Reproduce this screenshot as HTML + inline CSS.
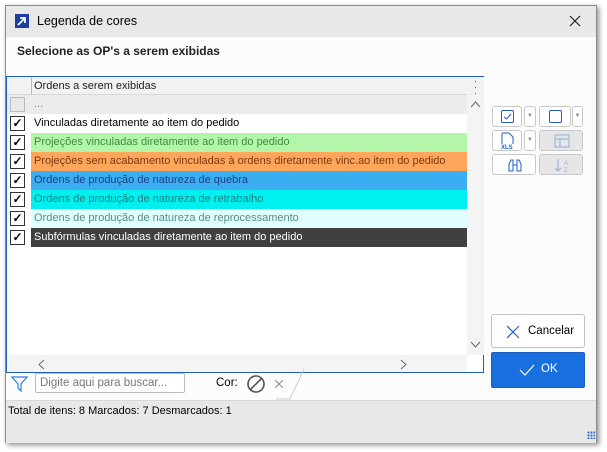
<!DOCTYPE html>
<html><head><meta charset="utf-8"><style>
*{box-sizing:border-box;margin:0;padding:0}
body{width:607px;height:452px;background:#fff;font-family:"Liberation Sans",sans-serif;font-size:11.5px;color:#000;position:relative;overflow:hidden}
.win{position:absolute;left:5px;top:5px;width:592px;height:438px;background:#fcfcfc;border:1px solid #8a8a8a;box-shadow:2px 2px 5px rgba(0,0,0,.45)}
.title{position:absolute;left:0;top:0;width:590px;height:31px;background:#e8e8e8}
.abs{position:absolute}
.grid{position:absolute;left:0px;top:70px;width:478px;height:297px;border:1px solid #1f5fc4;background:#fff}
.row{position:absolute;left:0;width:460px;height:19px;font-size:11px;line-height:19px}
.cb{position:absolute;left:3px;top:2px;width:15px;height:15px;border:1px solid #333;background:#fff;font-size:12px;line-height:13px;text-align:center;font-weight:bold}
.txt{position:absolute;left:24px;top:0;right:0;height:19px;padding-left:3px;white-space:nowrap;overflow:hidden}
.sb{position:absolute;border:1px solid #c8c8c8;border-radius:3px;background:#fff}
.sb.dis{background:#e6e6e6}
</style></head><body>
<div class="win">
 <div class="title">
  <div class="abs" style="left:9px;top:8px;width:14px;height:14px;background:#1a3f9c"><svg width="14" height="14"><path d="M3 11 L10 4 M5 4 H10 V9" stroke="#fff" stroke-width="1.8" fill="none"/></svg></div>
  <div class="abs" style="left:31px;top:8px;font-size:12.5px">Legenda de cores</div>
  <svg class="abs" style="left:563px;top:9px" width="12" height="12"><path d="M1 1 L11 11 M11 1 L1 11" stroke="#222" stroke-width="1.2"/></svg>
 </div>
 <div class="abs" style="left:11px;top:38px;font-weight:bold;font-size:12px;color:#222">Selecione as OP's a serem exibidas</div>
 <div class="grid">
  <div class="abs" style="left:0;top:0;width:460px;height:18px;background:#f2f2f2;border-bottom:1px solid #d8d8d8"></div>
  <div class="abs" style="left:24px;top:0;width:1px;height:18px;background:#bbb"></div>
  <div class="abs" style="left:27px;top:3px;color:#222;font-size:11px">Ordens a serem exibidas</div>
  <div class="abs" style="left:460px;top:0;width:17px;height:18px;background:#f2f2f2;color:#1f5fc4;text-align:center;font-size:10px;line-height:6px;padding-top:2px">·<br>·<br>·</div>
  <div class="row" style="top:18px;background:#ececec"><div class="cb" style="border-color:#bbb;background:#e8e8e8"></div><div class="txt" style="color:#888">...</div></div>
  <div class="row" style="top:37px"><div class="cb">✓</div><div class="txt" style="background:#fff">Vinculadas diretamente ao item do pedido</div></div>
  <div class="row" style="top:56px"><div class="cb">✓</div><div class="txt" style="background:#b3f5a9;color:#3a8f3a">Projeções vinculadas diretamente ao item do pedido</div></div>
  <div class="row" style="top:75px"><div class="cb">✓</div><div class="txt" style="background:#ffa55c;color:#7a3a10">Projeções sem acabamento vinculadas à ordens diretamente vinc.ao item do pedido</div></div>
  <div class="row" style="top:94px"><div class="cb">✓</div><div class="txt" style="background:#3aaef0;color:#1b3f8a">Ordens de produção de natureza de quebra</div></div>
  <div class="row" style="top:113px"><div class="cb">✓</div><div class="txt" style="background:#00f0f0;color:#1e7f7f">Ordens de produção de natureza de retrabalho</div></div>
  <div class="row" style="top:132px"><div class="cb">✓</div><div class="txt" style="background:#e0ffff;color:#5a8a8a">Ordens de produção de natureza de reprocessamento</div></div>
  <div class="row" style="top:151px"><div class="cb">✓</div><div class="txt" style="background:#404040;color:#fff">Subfórmulas vinculadas diretamente ao item do pedido</div></div>
  <div class="abs" style="left:460px;top:18px;width:17px;height:260px;background:#f4f4f4"></div>
  <svg class="abs" style="left:463px;top:24px" width="11" height="7"><path d="M1 6 L5.5 1 L10 6" stroke="#666" fill="none"/></svg>
  <svg class="abs" style="left:463px;top:264px" width="11" height="7"><path d="M1 1 L5.5 6 L10 1" stroke="#666" fill="none"/></svg>
  <div class="abs" style="left:0;top:278px;width:460px;height:17px;background:#f4f4f4"></div>
  <svg class="abs" style="left:31px;top:282px" width="7" height="11"><path d="M6 1 L1 5.5 L6 10" stroke="#666" fill="none"/></svg>
  <svg class="abs" style="left:393px;top:282px" width="7" height="11"><path d="M1 1 L6 5.5 L1 10" stroke="#666" fill="none"/></svg>
 </div>
 <svg class="abs" style="left:5px;top:369px" width="18" height="18"><path d="M1 2 H16 L10 9 V16 L7 13 V9 Z" stroke="#2f7de1" stroke-width="1.2" fill="none"/></svg>
 <div class="abs" style="left:29px;top:367px;width:150px;height:20px;border:1px solid #bbb;border-radius:2px;background:#fff;color:#777;padding:3px 4px">Digite aqui para buscar...</div>
 <div class="abs" style="left:210px;top:371px">Cor:</div>
 <svg class="abs" style="left:240px;top:368px" width="20" height="20"><circle cx="10" cy="10" r="8" stroke="#555" stroke-width="1.6" fill="none"/><path d="M4 16 L16 4" stroke="#555" stroke-width="1.6"/></svg>
 <svg class="abs" style="left:268px;top:373px" width="10" height="10"><path d="M1 1 L9 9 M9 1 L1 9" stroke="#999" stroke-width="1.2"/></svg>
 <svg class="abs" style="left:270px;top:362px" width="30" height="32"><path d="M0 31 H14 L28 1" stroke="#ccc" fill="none"/></svg>
 <div class="abs" style="left:0;top:394px;width:590px;height:43px;background:#e8e8e8;border-top:1px solid #d8d8d8"></div>
 <div class="abs" style="left:2px;top:399px;font-size:11px">Total de itens: 8 Marcados: 7 Desmarcados: 1</div>
 <!-- side buttons -->
 <div class="sb" style="left:486px;top:100px;width:30px;height:21px"><div class="abs" style="left:8px;top:3px;width:13px;height:13px;border:1.5px solid #1f5fc4;border-radius:2px"><svg class="abs" style="left:1px;top:1px" width="9" height="9"><path d="M1 5 L3.5 7 L8 2" stroke="#1f5fc4" fill="none"/></svg></div></div>
 <div class="sb" style="left:518px;top:100px;width:12px;height:21px;color:#888;font-size:6px;text-align:center;line-height:19px">▼</div>
 <div class="sb" style="left:533px;top:100px;width:32px;height:21px"><div class="abs" style="left:9px;top:3px;width:13px;height:13px;border:1.5px solid #1f5fc4;border-radius:2px"></div></div>
 <div class="sb" style="left:566px;top:100px;width:11px;height:21px;color:#888;font-size:6px;text-align:center;line-height:19px">▼</div>
 <div class="sb" style="left:486px;top:124px;width:30px;height:21px"><svg class="abs" style="left:7px;top:1px" width="16" height="18"><path d="M2 1 H9 L13 5 V12 M2 1 V12" stroke="#1f5fc4" fill="none"/><text x="1" y="17" font-size="6" font-weight="bold" fill="#1f5fc4" font-family="Liberation Sans">XLS</text></svg></div>
 <div class="sb" style="left:518px;top:124px;width:12px;height:21px;color:#888;font-size:6px;text-align:center;line-height:19px">▼</div>
 <div class="sb dis" style="left:533px;top:124px;width:44px;height:21px"><svg class="abs" style="left:14px;top:3px" width="16" height="14"><rect x="1" y="1" width="14" height="12" stroke="#8fb0e0" fill="none"/><path d="M1 5 H15 M6 5 V13" stroke="#8fb0e0"/></svg></div>
 <div class="sb" style="left:486px;top:148px;width:44px;height:21px"><svg class="abs" style="left:14px;top:3px" width="16" height="15"><path d="M2 13 V6 L4 2 H6 V13 Z M14 13 V6 L12 2 H10 V13 Z M6 7 H10" stroke="#1f5fc4" fill="none"/></svg></div>
 <div class="sb dis" style="left:533px;top:148px;width:44px;height:21px"><svg class="abs" style="left:14px;top:2px" width="18" height="17"><path d="M4 2 V14 M1 11 L4 14 L7 11" stroke="#8fb0e0" fill="none"/><text x="10" y="8" font-size="6" fill="#8fb0e0" font-family="Liberation Sans">A</text><text x="10" y="15" font-size="6" fill="#8fb0e0" font-family="Liberation Sans">Z</text></svg></div>
 <div class="abs" style="left:485px;top:308px;width:94px;height:34px;border:1px solid #c0c0c0;border-radius:3px;background:#fff"><svg class="abs" style="left:14px;top:10px" width="14" height="14"><path d="M1 1 L13 13 M13 1 L1 13" stroke="#1f5fc4" stroke-width="1.2"/></svg><div class="abs" style="left:36px;top:10px">Cancelar</div></div>
 <div class="abs" style="left:485px;top:346px;width:94px;height:36px;border:1px solid #1a5fc0;border-radius:2px;background:#1a6fdf"><svg class="abs" style="left:27px;top:11px" width="16" height="12"><path d="M1 6 L6 11 L15 1" stroke="#fff" stroke-width="1.2" fill="none"/></svg><div class="abs" style="left:49px;top:10px;color:#fff">OK</div></div>
 <div class="abs" style="left:581px;top:425px;width:8px;height:8px;background:radial-gradient(circle,#2f6fd0 1px,transparent 1.2px) 0 0/3px 3px"></div>
</div>
</body></html>
